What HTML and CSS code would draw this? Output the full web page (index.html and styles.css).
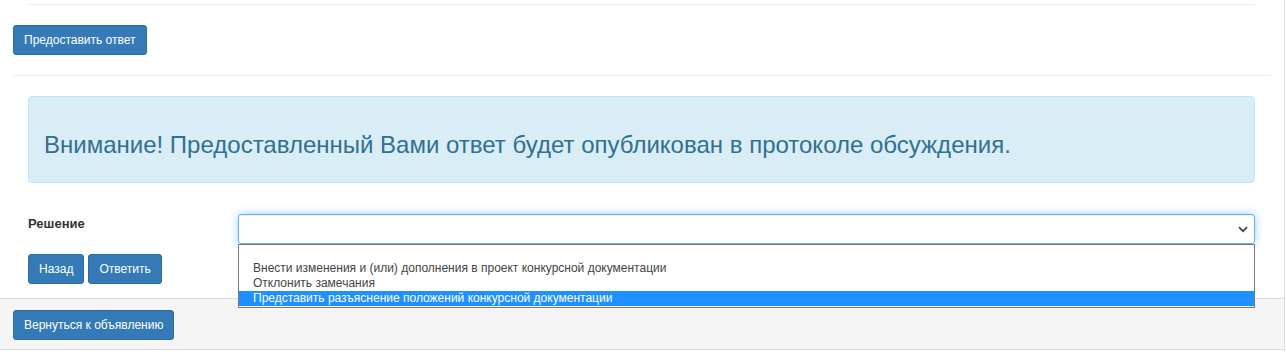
FILE: index.html
```html
<!DOCTYPE html>
<html lang="ru">
<head>
    <meta charset="UTF-8">
    <title>Ответ на замечания</title>
    <link rel="stylesheet" href="styles.css">
</head>
<body>
    <div class="panel">
        <div class="panel-body">
            <div class="section">
                <div class="rule"></div>
            </div>

            <button class="btn">Предоставить ответ</button>

            <hr>

            <div class="section">
                <div class="alert">
                    <h3>Внимание! Предоставленный Вами ответ будет опубликован в протоколе обсуждения.</h3>
                </div>

                <div class="form-row">
                    <label class="form-label">Решение</label>
                    <div class="select-wrap">
                        <div class="select">
                            <svg class="chevron" width="10" height="7" viewBox="0 0 10 7">
                                <path d="M1 1.2 L5 5.2 L9 1.2" fill="none" stroke="#444" stroke-width="1.8"/>
                            </svg>
                        </div>
                        <ul class="options">
                            <li class="option"></li>
                            <li class="option">Внести изменения и (или) дополнения в проект конкурсной документации</li>
                            <li class="option">Отклонить замечания</li>
                            <li class="option selected">Представить разъяснение положений конкурсной документации</li>
                        </ul>
                    </div>
                </div>

                <div class="actions">
                    <button class="btn">Назад</button>
                    <button class="btn">Ответить</button>
                </div>
            </div>
        </div>

        <div class="panel-footer">
            <button class="btn">Вернуться к объявлению</button>
        </div>
    </div>
</body>
</html>
```

FILE: styles.css
```css
* {
    margin: 0;
    padding: 0;
    box-sizing: border-box;
    font-family: "Liberation Sans", Arial, sans-serif;
}

body {
    background: #fff;
    color: #333;
    font-size: 12px;
}

.panel {
    width: 1285px;
    border-right: 1px solid #ddd;
    border-bottom: 1px solid #ddd;
}

.panel-body {
    padding: 4px 13px 14px;
}

.section {
    margin: 0 16px 0 15px;
}

.rule {
    border-top: 1px solid #eee;
}

.btn {
    display: inline-block;
    height: 30px;
    padding: 0 10px;
    font-size: 12px;
    line-height: 28px;
    color: #fff;
    background: #337ab7;
    border: 1px solid #2e6da4;
    border-radius: 3px;
    cursor: pointer;
}

.btn:hover {
    background: #286090;
}

.panel-body > .btn {
    margin-top: 20px;
}

hr {
    border: 0;
    border-top: 1px solid #eee;
    margin: 20px 0;
}

.alert {
    height: 87px;
    padding: 0 15px;
    background: #d9edf7;
    border: 1px solid #bce8f1;
    border-radius: 4px;
    color: #31708f;
}

.alert h3 {
    margin-top: 35px;
    font-size: 24px;
    font-weight: normal;
    line-height: 26px;
}

.form-row {
    display: flex;
    margin-top: 31px;
}

.form-label {
    width: 210px;
    padding-top: 2px;
    font-size: 13px;
    font-weight: bold;
    color: #333;
}

.select-wrap {
    position: relative;
    flex: 1;
}

.select {
    height: 30px;
    display: flex;
    align-items: center;
    justify-content: flex-end;
    padding-right: 6px;
    border: 1px solid #66afe9;
    border-radius: 3px;
    box-shadow: inset 0 1px 1px rgba(0, 0, 0, 0.075), 0 0 8px rgba(102, 175, 233, 0.6);
}

.options {
    position: absolute;
    top: 30px;
    left: 0;
    right: 0;
    list-style: none;
    background: #fff;
    border: 1px solid #7a7a7a;
    padding: 1px 0;
    z-index: 5;
}

.option {
    height: 15px;
    padding-left: 14px;
    font-size: 12px;
    line-height: 15px;
    color: #444;
}

.option.selected {
    background: #1e90ff;
    color: #fff;
}

.actions {
    display: flex;
    gap: 4px;
    margin-top: 10px;
}

.panel-footer {
    background: #f5f5f5;
    border-top: 1px solid #ddd;
    padding: 11px 13px 9px;
}
```
